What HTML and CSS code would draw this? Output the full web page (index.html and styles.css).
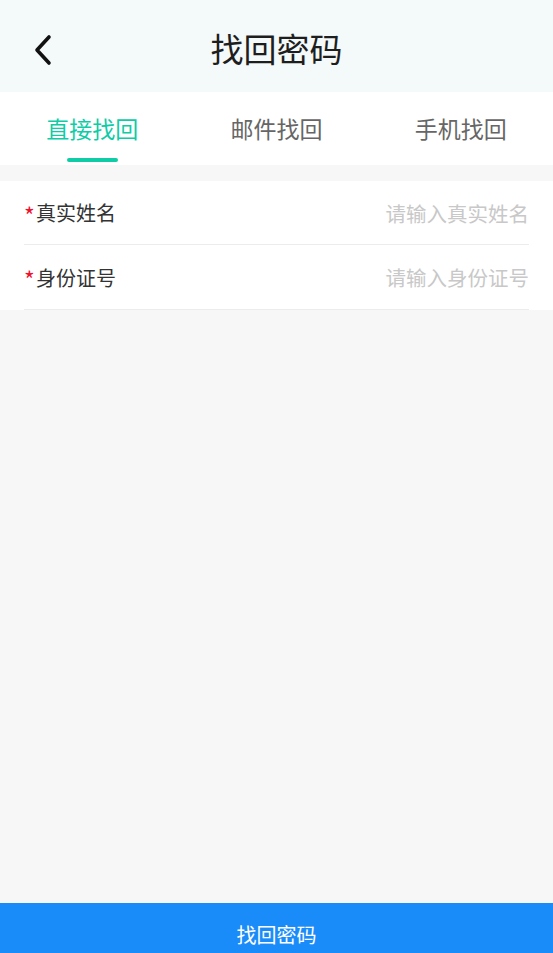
FILE: index.html
```html
<!DOCTYPE html>
<html lang="zh-CN">
<head>
    <meta charset="UTF-8">
    <meta name="viewport" content="width=device-width, initial-scale=1.0">
    <title>找回密码</title>
    <link rel="stylesheet" href="styles.css">
</head>
<body>
    <div class="page">
        <!-- Header -->
        <header class="header">
            <a class="back" href="#">
                <svg width="20" height="32" viewBox="0 0 20 32">
                    <path d="M16 3 L4 16 L16 29" fill="none" stroke="#111" stroke-width="3.6" stroke-linecap="round" stroke-linejoin="round"/>
                </svg>
            </a>
            <h1 class="title">找回密码</h1>
        </header>

        <!-- Tabs -->
        <nav class="tabs">
            <div class="tab active">直接找回</div>
            <div class="tab">邮件找回</div>
            <div class="tab">手机找回</div>
        </nav>

        <!-- Form -->
        <form class="form" action="#" method="post">
            <div class="row">
                <label for="realName"><span class="req">*</span>真实姓名</label>
                <input type="text" id="realName" placeholder="请输入真实姓名">
            </div>
            <div class="row">
                <label for="idCard"><span class="req">*</span>身份证号</label>
                <input type="text" id="idCard" placeholder="请输入身份证号">
            </div>
        </form>

        <div class="spacer"></div>

        <button class="submit" type="button">找回密码</button>
    </div>
</body>
</html>
```

FILE: styles.css
```css
* {
    box-sizing: border-box;
}

body {
    margin: 0;
    font-family: "Noto Sans CJK SC", "Noto Sans", sans-serif;
    background: #f7f7f7;
}

.page {
    display: flex;
    flex-direction: column;
    height: 953px;
}

.header {
    height: 92px;
    background: #f4f9f9;
    display: flex;
    align-items: center;
    justify-content: center;
    position: relative;
}

.back {
    position: absolute;
    left: 33px;
    top: 34px;
    display: block;
}

.back svg {
    display: block;
}

.title {
    margin: 0;
    font-size: 33px;
    font-weight: normal;
    color: #1e1e1e;
    line-height: 1;
    padding-top: 4px;
}

.tabs {
    height: 73px;
    background: #fff;
    display: grid;
    grid-template-columns: 1fr 1fr 1fr;
    margin-bottom: 16px;
}

.tab {
    font-size: 23px;
    color: #666;
    text-align: center;
    line-height: 1;
    padding-top: 25px;
    position: relative;
}

.tab.active {
    color: #0fcca6;
}

.tab.active::after {
    content: "";
    position: absolute;
    left: 67px;
    top: 66px;
    width: 51px;
    height: 4px;
    border-radius: 2px;
    background: #0fcca6;
}

.form {
    background: #fff;
    padding: 0 24px;
}

.row {
    display: flex;
    align-items: center;
    justify-content: space-between;
    height: 64px;
    border-bottom: 1px solid #ececec;
}

.row + .row {
    height: 65px;
}

.row label {
    font-size: 20px;
    color: #333;
    display: flex;
    align-items: center;
}

.req {
    color: #f0102c;
    font-size: 23px;
    width: 12px;
    margin-top: 4px;
}

.row input {
    border: none;
    outline: none;
    font-family: inherit;
    font-size: 20.5px;
    text-align: right;
    width: 200px;
    padding: 0;
    color: #333;
}

.row input::placeholder {
    color: #c8c8c8;
}

.spacer {
    flex: 1;
}

.submit {
    height: 50px;
    border: none;
    background: #1a8cfa;
    color: #fff;
    font-family: inherit;
    font-size: 20px;
    padding: 14px 0 0;
    line-height: 28px;
    display: block;
    width: 100%;
}
```
